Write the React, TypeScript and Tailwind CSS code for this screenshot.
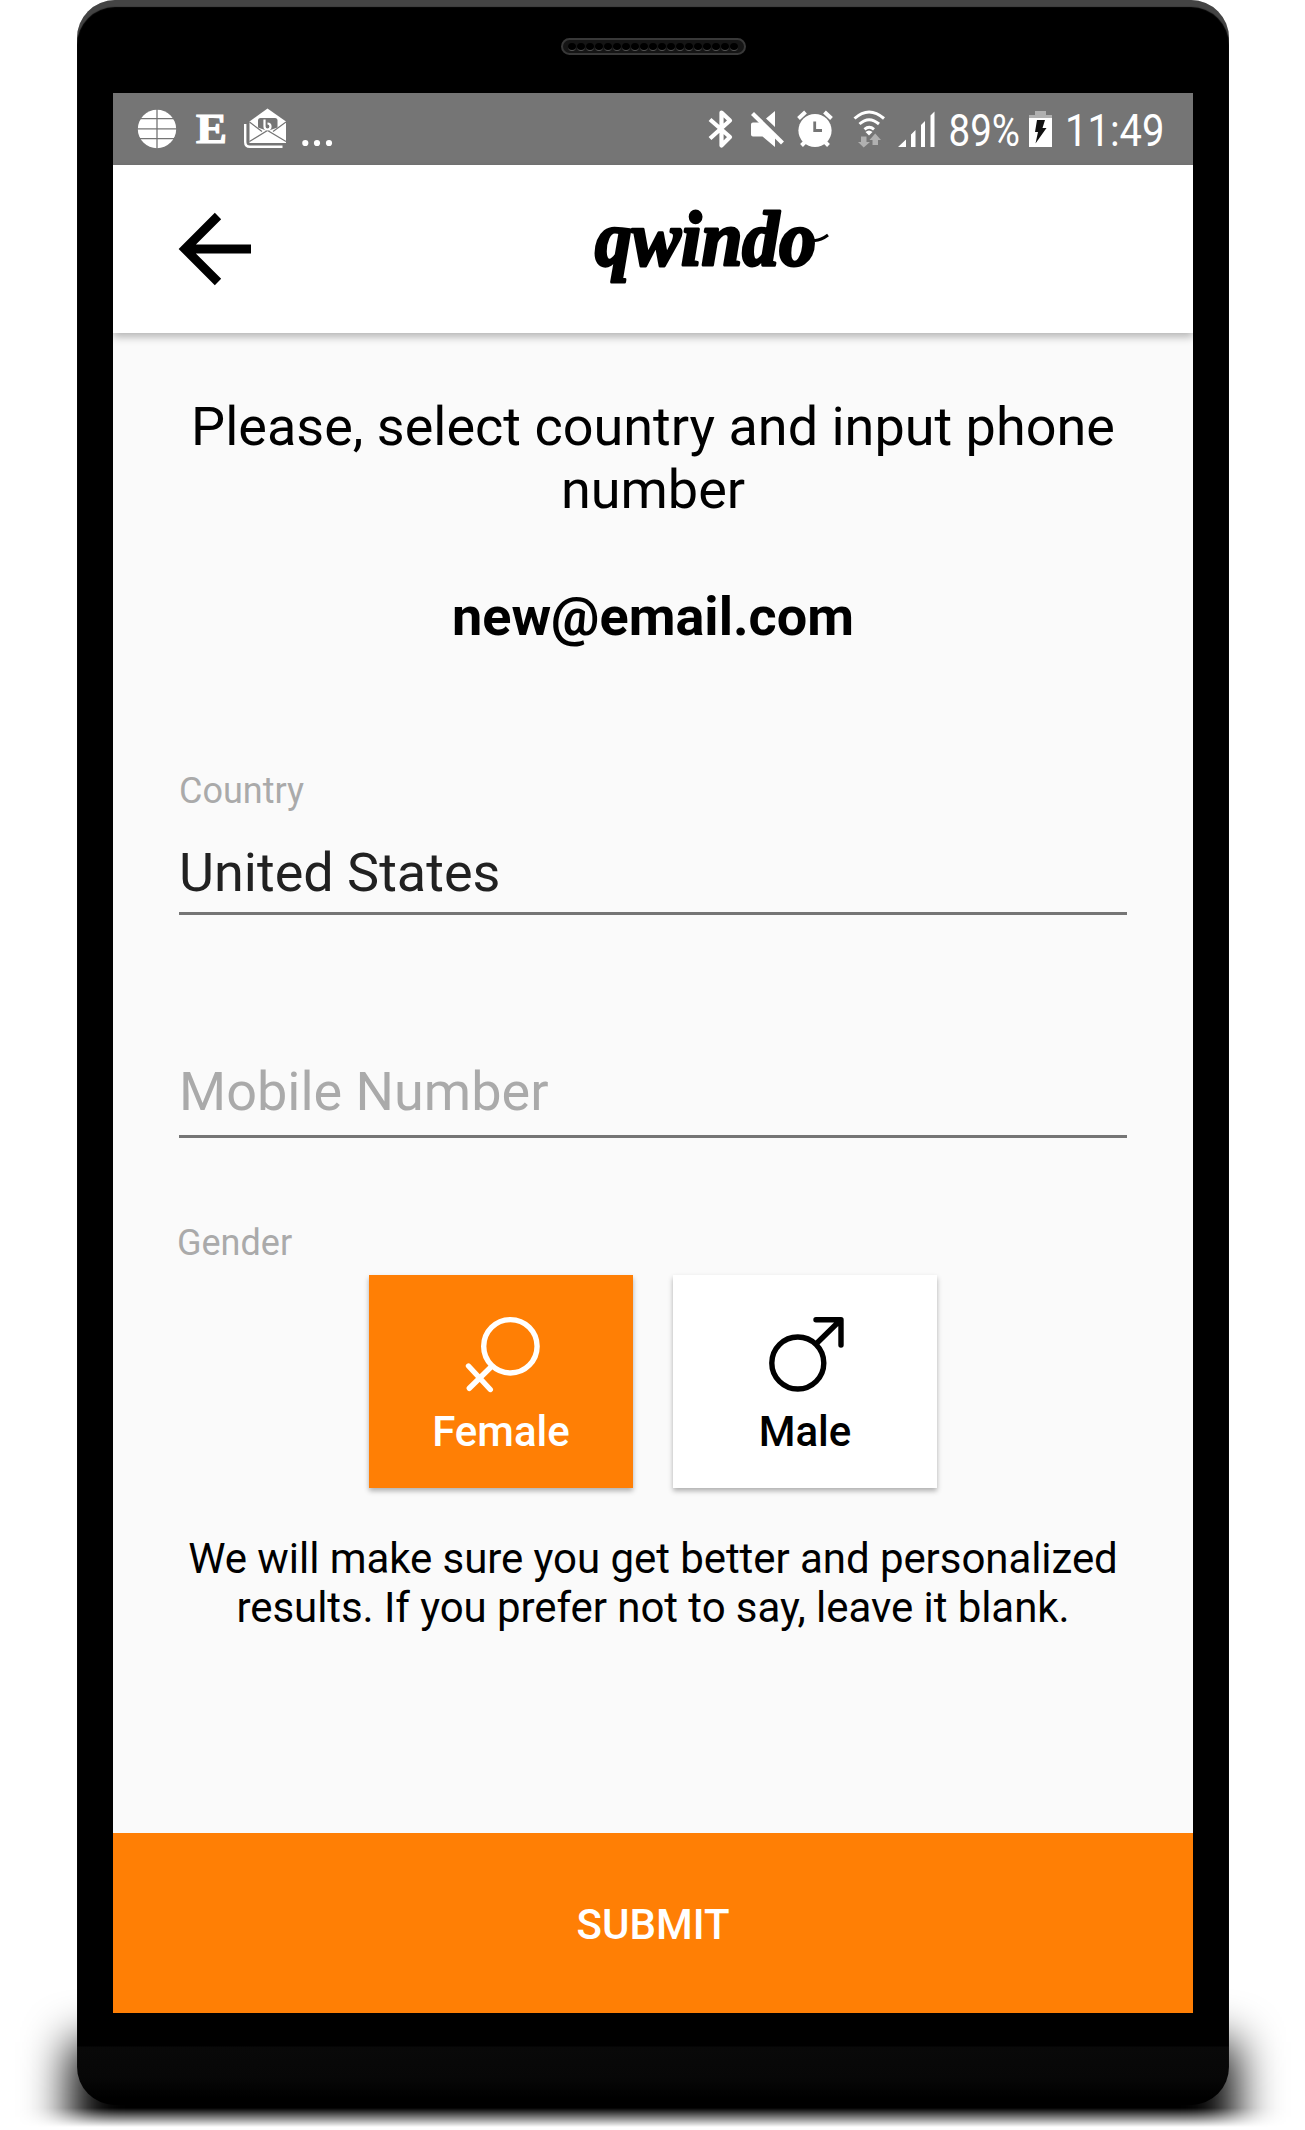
import React from "react";

const T = "font-['Roboto',sans-serif] whitespace-nowrap";

function StatusBar() {
  return (
    <div className="flex h-[72px] items-start justify-between bg-[#757575] text-white">
      <svg width="260" height="72" viewBox="113 93 260 72" fill="#fff">
        <circle cx="157" cy="129" r="19.2" />
        <path d="M157 109v40M137 118.700h40M137 128.800h40M137 138.700h40" stroke="#757575" strokeWidth="1.300" />
        <text x="196" y="143" fontFamily="Liberation Serif" fontWeight="bold" fontSize="43" textLength="31" lengthAdjust="spacingAndGlyphs" stroke="#fff" strokeWidth="1.200">E</text>
        <path d="M249.500 121.500L267.500 108.500L286 121.500V143H249.500Z" />
        <path d="M258 120.500q0-2.500 2.500-2.500h14.500q2.500 0 2.500 2.500v7L267.500 131L258 127.500Z" fill="#757575" />
        <path d="M249.500 122L262 131.500M286 122L273 131.500M249.500 141.500L267.500 130.500L286 141.500" stroke="#757575" strokeWidth="1.200" fill="none" />
        <path d="M264.500 119.500v7a3 3 0 1 0 3-3" stroke="#fff" strokeWidth="2.200" fill="none" />
        <path d="M245.200 124V142q0 4.800 4.800 4.800H282.500" stroke="#fff" strokeWidth="2.400" fill="none" />
        <circle cx="305.300" cy="143" r="3.100" /><circle cx="317" cy="143" r="3.100" /><circle cx="329" cy="143" r="3.100" />
      </svg>
      <svg width="510" height="72" viewBox="683 93 510 72" fill="#fff">
        <path d="M710 119.500L730 137L721.500 145.500V112.500L730 120.500L710 138.500" fill="none" stroke="#fff" strokeWidth="4.200" strokeLinejoin="round" />
        <path d="M753 122.500H760L775 137V147L762.500 136.500H753q-2 0-2-2V124.500q0-2 2-2ZM775 111V127L766 118.500Z" />
        <path d="M752.500 113.500L782.500 143" stroke="#fff" strokeWidth="4.200" />
        <circle cx="815" cy="130.500" r="16.600" />
        <path d="M798.500 118.500l7-6.500M831.500 118.500l-7-6.500M801.500 145.500l5-5M828.500 145.500l-5-5" stroke="#fff" strokeWidth="4" />
        <path d="M814.700 121.500V130.500H822" fill="none" stroke="#757575" strokeWidth="2.800" />
        <path d="M854.500 118.500q14.500-13 29.500 0M859.500 124q9.500-8.500 19.500 0M864.500 129.300q4.700-4 9.500 0" fill="none" stroke="#fff" strokeWidth="3" />
        <path d="M865.500 132q3.500-3 7 0L869 135.500Z" />
        <path d="M861 136.500h5.500v5.500h3.500l-6.300 5.500l-5.700-5.500h3ZM872.500 145h5.500v-5h3l-5.800-6.500l-5.700 6.500h3Z" fill="#b0b0b0" />
        <path d="M898 147L906 139.500V147ZM911 134.500l4.500-4.500V147H911ZM921 125l4-4V147h-4ZM930.500 115.500l4-4V147h-4Z" />
        <g fontFamily="Roboto" fontSize="45">
          <text x="948.500" y="145.800" textLength="71.500" lengthAdjust="spacingAndGlyphs">89%</text>
          <text x="1065" y="145.800" textLength="99.500" lengthAdjust="spacingAndGlyphs">11:49</text>
        </g>
        <path d="M1035 111h11v4h6v3h-23v-3h6Z" fill="#b0b0b0" />
        <path d="M1029 118h23v29h-23Z" />
        <path d="M1037 120h8l-2.500 8h4L1035.500 143.500l2.500-11.500h-3Z" fill="#111" />
      </svg>
    </div>
  );
}

function AppBar() {
  return (
    <div className="relative z-10 flex h-[168px] bg-white shadow-[0_4px_8px_rgba(0,0,0,0.28)]">
      <svg width="300" height="168" viewBox="113 165 300 168">
        <path d="M251 249H186M218 216L185 249L218 282" fill="none" stroke="#000" strokeWidth="9" />
      </svg>
      <svg className="ml-[150px]" width="300" height="168" viewBox="563 165 300 168">
        <text x="595" y="264.500" fontFamily="Liberation Serif" fontStyle="italic" fontWeight="bold" fontSize="79" stroke="#000" strokeWidth="3" strokeLinejoin="round" textLength="221" lengthAdjust="spacingAndGlyphs">qwindo</text>
        <path d="M808 238q8 6 20-3" fill="none" stroke="#000" strokeWidth="3" />
      </svg>
    </div>
  );
}

function GenderCard({ label, female }: { label: string; female?: boolean }) {
  return (
    <div className={`flex h-[213px] w-[264px] flex-col items-center pt-[41px] shadow-[0_3px_5px_rgba(0,0,0,0.3)] ${female ? "bg-[#ff7f05] text-white" : "bg-white text-black"}`}>
      <svg width="78" height="78" viewBox="0 0 78 78" fill="none" stroke="currentColor" strokeWidth="5.400" strokeLinecap="round" strokeLinejoin="round">
        {female ? (
          <><circle cx="48.400" cy="30.300" r="26.700" /><path d="M29.500 50.500L7.300 72.300M6.500 50L28.300 73.500" /></>
        ) : (
          <><circle cx="31.800" cy="47" r="26" /><path d="M50.500 27.500L74 4.500M50 3.700H75V29" /></>
        )}
      </svg>
      <span className={`${T} mt-[13px] text-[42px] leading-[49px] font-medium`}>{label}</span>
    </div>
  );
}

export default function App() {
  return (
    <div className="relative flex h-[2130px] w-[1305px] overflow-hidden bg-white pl-[77px]">
      <div className="absolute top-[1960px] left-0 h-[167px] w-full [mask-image:linear-gradient(to_bottom,#000_148px,transparent_167px)]">
        <div className="absolute top-[82px] left-[70px] h-[170px] w-[1166px] bg-black blur-[23px]" />
      </div>
      <div className="relative flex h-[2105px] w-[1152px] flex-col items-center rounded-[38px] bg-black bg-[linear-gradient(to_bottom,transparent_2046px,#090909_2047px,#070707_2078px,#000_2098px)] shadow-[inset_0_7px_1px_#444]">
        <div className="mt-[38px] flex h-[17px] w-[185px] items-center justify-around rounded-full border-2 border-[#383838] bg-[#151515] px-[5px]">
          {Array.from({ length: 19 }, (_, i) => (
            <i key={i} className="size-[8px] rounded-full border-b border-[#555] bg-black" />
          ))}
        </div>
        <div className="mt-[38px] flex h-[1920px] w-[1080px] flex-col bg-[#fafafa]">
          <StatusBar />
          <AppBar />
          <div className="flex h-[1500px] flex-col px-[66px] text-black">
            <h1 className={`${T} mt-[62px] text-center text-[54px] leading-[63px]`}>Please, select country and input phone<br />number</h1>
            <p className={`${T} mt-[64px] text-center text-[54px] leading-[63px] font-bold`}>new@email.com</p>
            <label className={`${T} mt-[122px] text-[36px] leading-[42px] text-[#aaa]`}>Country</label>
            <div className={`${T} mt-[29px] h-[74px] border-b-3 border-[#757575] text-[54px] leading-[63px] text-[#212121]`}>United States</div>
            <div className={`${T} mt-[145px] h-[78px] border-b-3 border-[#757575] text-[54px] leading-[63px] text-[#aaa]`}>Mobile Number</div>
            <label className={`${T} mt-[84px] -ml-[2px] text-[36px] leading-[42px] text-[#aaa]`}>Gender</label>
            <div className="mt-[11px] flex justify-center gap-[40px]">
              <GenderCard label="Female" female />
              <GenderCard label="Male" />
            </div>
            <p className={`${T} mt-[46px] text-center text-[42px] leading-[49px] tracking-[-0.065px]`}>We will make sure you get better and personalized<br />results. If you prefer not to say, leave it blank.</p>
          </div>
          <button className={`${T} flex h-[180px] items-center justify-center bg-[#ff7f05] pt-[2px] text-[42px] font-medium text-white`}>SUBMIT</button>
        </div>
      </div>
    </div>
  );
}
